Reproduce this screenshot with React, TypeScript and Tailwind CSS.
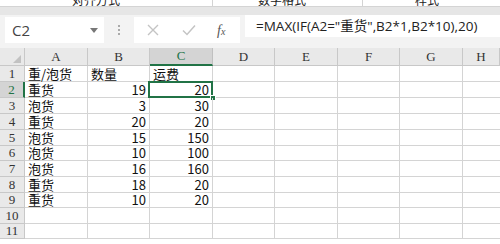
import React from 'react';

const cols = ['A', 'B', 'C', 'D', 'E', 'F', 'G', 'H'];

// 重/泡货 rows
const rows: [string, string, string][] = [
  ['重/泡货', '数量', '运费'],
  ['重货', '19', '20'],
  ['泡货', '3', '30'],
  ['重货', '20', '20'],
  ['泡货', '15', '150'],
  ['泡货', '10', '100'],
  ['泡货', '16', '160'],
  ['重货', '18', '20'],
  ['重货', '10', '20'],
  ['', '', ''],
  ['', '', ''],
];

const rowH = ['h-[16px]', 'h-[16px]', 'h-[16px]', 'h-[16px]', 'h-[16px]', 'h-[15px]', 'h-[16px]', 'h-[16px]', 'h-[15px]', 'h-[16px]', 'h-[15px]'];

const cellFont = { fontFamily: '"Noto Sans CJK SC", "Liberation Sans", sans-serif' };
const serif = { fontFamily: '"Liberation Serif", "DejaVu Serif", serif' };

export default function App() {
  return (
    <div className="w-[500px] h-[244px] overflow-hidden bg-white flex flex-col" style={cellFont}>
      {/* ribbon remnant */}
      <div className="h-[7px] flex border-b border-[#d4d4d4] overflow-hidden">
        <div className="w-[213px] border-r border-[#d4d4d4] pl-[72px] overflow-hidden">
          <div className="text-[12px] leading-[12px] -mt-[6px] text-[#222] whitespace-nowrap">对齐方式</div>
        </div>
        <div className="w-[150px] border-r border-[#d4d4d4] pl-[45px] overflow-hidden">
          <div className="text-[12px] leading-[12px] -mt-[6px] text-[#222] whitespace-nowrap">数字格式</div>
        </div>
        <div className="flex-1 pl-[52px] overflow-hidden">
          <div className="text-[12px] leading-[12px] -mt-[6px] text-[#222] whitespace-nowrap">样式</div>
        </div>
      </div>
      <div className="h-[8px] bg-[#e6e6e6]" />

      {/* formula bar */}
      <div className="h-[33px] bg-[#f3f3f3] flex items-start">
        <div className="ml-[5px] mt-[2px] w-[99px] h-[26px] bg-white flex items-center justify-between pl-[7px] pr-[6px]">
          <span className="text-[15px] text-[#444]" style={{ fontFamily: '"Open Sans", "Liberation Sans", sans-serif' }}>C2</span>
          <svg width="8" height="5" viewBox="0 0 8 5"><path d="M0 0h8L4 5z" fill="#777" /></svg>
        </div>
        <div className="w-[30px] h-[30px] flex flex-col items-center justify-center gap-[2px]">
          <span className="w-[2px] h-[2px] bg-[#aaa]" />
          <span className="w-[2px] h-[2px] bg-[#aaa]" />
          <span className="w-[2px] h-[2px] bg-[#aaa]" />
        </div>
        <div className="mt-[2px] w-[106px] h-[26px] bg-white flex items-center">
          <svg className="ml-[13px]" width="12" height="12" viewBox="0 0 12 12"><path d="M1 1l10 10M11 1L1 11" stroke="#c4c4c4" strokeWidth="1.4" /></svg>
          <svg className="ml-[23px]" width="14" height="12" viewBox="0 0 14 12"><path d="M1 6.5l4 4L13 1.5" stroke="#c4c4c4" strokeWidth="1.5" fill="none" /></svg>
          <span className="ml-[21px] text-[14px] italic text-[#555]" style={serif}>f<span className="text-[10px]">x</span></span>
        </div>
        <div className="ml-[5px] flex-1 h-[22px] bg-white flex items-center pl-[11px]">
          <span className="text-[13.5px] text-[#222] whitespace-nowrap" style={{ fontFamily: '"Open Sans", "Noto Sans CJK SC", sans-serif' }}>
            =MAX(IF(A2="重货",B2*1,B2*10),20)
          </span>
        </div>
      </div>

      {/* sheet grid */}
      <div className="grid grid-cols-[25px_63px_62px_63px_62px_63px_62px_63px_1fr]">
        {/* header row */}
        <div className="h-[18px] bg-[#e9e9e9] border-r border-b border-[#c8c8c8] flex items-end justify-end pr-[3px] pb-[2px]">
          <svg width="8" height="8" viewBox="0 0 8 8"><path d="M8 0v8H0z" fill="#c2c2c2" /></svg>
        </div>
        {cols.map((c) => (
          <div
            key={c}
            className={
              c === 'C'
                ? 'h-[18px] bg-[#d4d4d4] border-r border-[#c0c0c0] border-b-2 border-b-[#217346] flex items-center justify-center text-[13px] text-[#217346]'
                : 'h-[18px] bg-[#e9e9e9] border-r border-b border-[#c8c8c8] flex items-center justify-center text-[13px] text-[#333]'
            }
            style={serif}
          >
            {c}
          </div>
        ))}

        {rows.map((r, i) => (
          <React.Fragment key={i}>
            <div
              className={
                (i === 1
                  ? 'bg-[#d4d4d4] text-[#217346] border-r-2 border-r-[#217346] border-b border-b-[#c8c8c8] '
                  : 'bg-[#e9e9e9] text-[#333] border-r border-b border-[#c8c8c8] ') +
                rowH[i] +
                ' flex items-center justify-center text-[13px] leading-[14px]'
              }
              style={serif}
            >
              {i + 1}
            </div>
            <div className={rowH[i] + ' border-r border-b border-[#d4d4d4] flex items-end pl-[3px] text-[13px] leading-[14px] text-[#111]'}>
              {r[0]}
            </div>
            <div className={rowH[i] + ' border-r border-b border-[#d4d4d4] flex items-end pl-[3px] text-[13px] leading-[14px] text-[#111] ' + (i === 0 ? 'justify-start' : 'justify-end pr-[3px]')}>
              {r[1]}
            </div>
            <div className={rowH[i] + ' relative border-r border-b border-[#d4d4d4] flex items-end pl-[3px] text-[13px] leading-[14px] text-[#111] ' + (i === 0 ? 'justify-start' : 'justify-end pr-[3px]')}>
              {r[2]}
              {i === 1 && (
                <>
                  <div className="absolute -left-[2px] -top-[1px] -right-[1px] -bottom-[1px] border-2 border-[#217346]" />
                  <div className="absolute -right-[4px] -bottom-[4px] w-[6px] h-[6px] bg-[#217346] border border-white" />
                </>
              )}
            </div>
            {[0, 1, 2, 3].map((k) => (
              <div key={k} className={rowH[i] + ' border-r border-b border-[#d4d4d4]'} />
            ))}
            <div className={rowH[i] + ' border-b border-[#d4d4d4]'} />
          </React.Fragment>
        ))}
      </div>
    </div>
  );
}
